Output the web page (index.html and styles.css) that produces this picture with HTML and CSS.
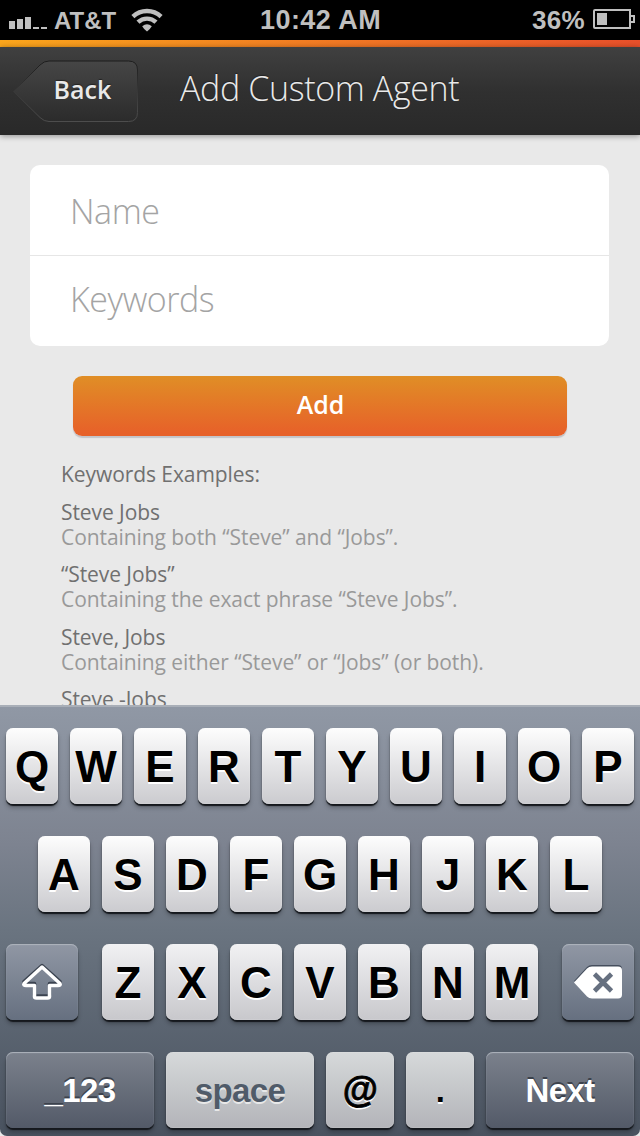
FILE: index.html
```
<!DOCTYPE html>
<html lang="en">
<head>
<meta charset="utf-8">
<title>Add Custom Agent</title>
<link rel="stylesheet" href="styles.css">
</head>
<body>
<div class="screen">
  <header class="status">
    <svg class="signal" width="38" height="14" viewBox="0 0 38 14" fill="#bfbfbf"><path d="M0 6h6v8H0zM8 4h6v10H8zM16 2h6v12h-6zM24 12h6v2h-6zM32 12h6v2h-6z"/></svg>
    <span class="carrier">AT&amp;T</span>
    <svg class="wifi" width="32" height="24" viewBox="0 0 32 24"><g fill="none" stroke="#bfbfbf" stroke-width="4.400"><path d="M1.900 8.600A20.500 20.500 0 0 1 30.100 8.600"/><path d="M7 14.200A13 13 0 0 1 25 14.200"/></g><path fill="#bfbfbf" d="M11.200 18.300Q16 14.300 20.800 18.300Q19 21.500 16 23.500Q13 21.500 11.200 18.300z"/></svg>
    <span class="time">10:42 AM</span>
    <span class="percent">36%</span>
    <svg class="battery" width="42" height="20" viewBox="0 0 42 20"><path fill="none" stroke="#bfbfbf" stroke-width="2" d="M2 1h35v18H2a1 1 0 0 1-1-1V2a1 1 0 0 1 1-1zM38 7h3v6h-3"/><path fill="#bfbfbf" d="M4 4h10v12H4z"/></svg>
  </header>
  <div class="accent"></div>
  <nav class="nav">
    <a class="back">
      <svg class="back-shape" width="128" height="64" viewBox="0 0 128 64">
        <defs>
          <linearGradient id="fill" x2="0" y2="1"><stop stop-color="#464646"/><stop offset="1" stop-color="#2b2b2b"/></linearGradient>
          <linearGradient id="edge" x2="0" y2="1"><stop stop-color="#1c1c1c"/><stop offset=".45" stop-color="#353535"/><stop offset="1" stop-color="#4d4d4d"/></linearGradient>
        </defs>
        <path fill="url(#fill)" stroke="url(#edge)" d="M1.500 31.500 28 5Q32 1 37 1H116.500Q125.500 1 125.500 10V52.500Q125.500 61.500 116.500 61.500H37Q32 61.500 28 57.500z"/>
      </svg>
      <span class="back-label">Back</span>
    </a>
    <h1 class="title">Add Custom Agent</h1>
  </nav>
  <main class="content">
    <div class="fields">
      <div class="field">Name</div>
      <div class="field">Keywords</div>
    </div>
    <button class="add">Add</button>
    <section class="examples">
      <p>Keywords Examples:</p>
      <p>Steve Jobs<br><span class="hint">Containing both “Steve” and “Jobs”.</span></p>
      <p>“Steve Jobs”<br><span class="hint">Containing the exact phrase “Steve Jobs”.</span></p>
      <p>Steve, Jobs<br><span class="hint">Containing either “Steve” or “Jobs” (or both).</span></p>
      <p>Steve -Jobs</p>
    </section>
  </main>
  <section class="keyboard">
    <div class="row"><b class="key">Q</b><b class="key">W</b><b class="key">E</b><b class="key">R</b><b class="key">T</b><b class="key">Y</b><b class="key">U</b><b class="key">I</b><b class="key">O</b><b class="key">P</b></div>
    <div class="row"><b class="key">A</b><b class="key">S</b><b class="key">D</b><b class="key">F</b><b class="key">G</b><b class="key">H</b><b class="key">J</b><b class="key">K</b><b class="key">L</b></div>
    <div class="row lower">
      <b class="key dark shift"><svg width="42" height="38" viewBox="0 0 42 38" fill="none" stroke-width="3.500" stroke-linejoin="round"><path stroke="#3b4350" d="M21 2.500 39 18.500Q40 20.500 37 20.500H28.500V31.500Q28.500 33 26.500 33H15.500Q13.500 33 13.500 31.500V20.500H5Q2 20.500 3 18.500z"/><path stroke="#fff" d="M21 4 39 20.500Q40 22.500 37 22.500H28.500V33.500Q28.500 35 26.500 35H15.500Q13.500 35 13.500 33.500V22.500H5Q2 22.500 3 20.500z"/></svg></b>
      <b class="key">Z</b><b class="key">X</b><b class="key">C</b><b class="key">V</b><b class="key">B</b><b class="key">N</b><b class="key">M</b>
      <b class="key dark delete"><svg width="48" height="34" viewBox="0 0 48 34"><path fill="#454e5d" d="M0 16 13 2Q15 0 18 0H44Q48 0 48 4V29H18z"/><path fill="#fff" d="M0 17.500 13 3.500Q15 1.500 18 1.500H44Q48 1.500 48 5.500V29.500Q48 33.500 44 33.500H18Q15 33.500 13 31.500z"/><path stroke="#667080" stroke-width="4.600" d="m20.500 9 17 17m0-17-17 17"/></svg></b>
    </div>
    <div class="row bottom">
      <b class="key dark wide">_123</b>
      <b class="key gray wide space">space</b>
      <b class="key gray at">@</b>
      <b class="key gray dot">.</b>
      <b class="key dark wide">Next</b>
    </div>
  </section>
</div>
</body>
</html>
```
FILE: styles.css
```
* { box-sizing: border-box; }
body { margin: 0; background: #000; }
.screen {
  width: 640px; height: 1136px; overflow: hidden;
  display: flex; flex-direction: column;
  background: #e9e9e9; font-family: "Open Sans", sans-serif;
}
.status {
  display: grid; flex: none; height: 40px; background: #000; color: #bfbfbf;
  grid-template-columns: 45px 77px 138px 272px 61px 47px;
  align-items: start;
  font: bold 24px/28px "Liberation Sans", sans-serif;
  white-space: nowrap;
}
.signal { margin: 15px 0 0 9px; }
.carrier { margin: 7px 0 0 9px; }
.wifi { margin: 8px 0 0 9px; }
.time { margin-top: 6px; font-size: 27px; letter-spacing: .45px; }
.percent { margin-top: 6px; font-size: 26px; letter-spacing: .3px; }
.battery { margin-top: 9px; }
.accent { flex: none; height: 7px; background: linear-gradient(90deg, #fba61c, #e8502b); }
.nav {
  flex: none; display: flex; height: 88px; padding: 13px 0 0 12px;
  background: linear-gradient(#404040, #303030 50%, #292929);
  box-shadow: 0 1px 6px rgba(0,0,0,.4); color: #e9e9e9; z-index: 1;
}
.back { display: grid; width: 128px; height: 64px; }
.back-shape, .back-label { grid-area: 1 / 1; }
.back-label { padding: 11px 0 0 41.500px; font-size: 25px; line-height: 36px; font-weight: 600; text-shadow: 0 -1px 1px #222; }
.title { margin: 4px 0 0 40px; font-size: 34px; line-height: 48px; font-weight: 300; letter-spacing: -.37px; white-space: nowrap; text-shadow: 0 -1px 1px #222; }
.content { flex: none; height: 570px; overflow: hidden; padding: 30px 30px 0; }
.fields { width: 579px; height: 181px; border-radius: 10px; background: #fff; }
.field { height: 90px; padding: 22px 40px 0; font-size: 34px; line-height: 48px; font-weight: 300; letter-spacing: -.45px; color: #a4a4a4; }
.field + .field { height: 91px; border-top: 1px solid #e6e6e6; padding-top: 19px; }
.add {
  display: block; width: 494px; height: 60px; margin: 30px 0 0 43px; padding: 0 0 5px 1px;
  border: 0; border-radius: 9px; background: linear-gradient(#e08e26, #e76129 95%);
  box-shadow: 0 2px 1px #c4c4c8; color: #fff; font: 600 25px/36px "Open Sans", sans-serif;
}
.examples { padding: 26px 0 0 31px; font-size: 21px; line-height: 25px; letter-spacing: -.07px; color: #707070; }
.examples p { margin: 0 0 12.500px; white-space: nowrap; }
.hint { color: #999; }
.keyboard {
  flex: none; display: flex; flex-direction: column; gap: 32px;
  height: 431px; padding: 21px 6px 0; border-top: 2px solid #a9afb8;
  border-radius: 0 0 7px 7px;
  background: linear-gradient(#9098a5, #7d8390 32%, #6a7480 52%, #49525f);
  font-family: "Liberation Sans", sans-serif;
}
.row { display: flex; justify-content: center; gap: 12px; height: 76px; }
.key {
  display: flex; align-items: center; justify-content: center;
  width: 52px; height: 76px; padding-top: 2px; border-radius: 7px;
  background: linear-gradient(#fdfdfd, #cbcbcf);
  box-shadow: 0 2px 1px #15181d, 0 4px 4px rgba(0,0,0,.25), inset 0 0 1px #fff;
  font-size: 44px; line-height: 50px; color: #000; text-shadow: 0 2px 0 #fff;
}
.lower .key { background: linear-gradient(#f1f1f3, #c8c8cc); }
.row .dark {
  background: linear-gradient(#9097a4, #667080); color: #fff;
  box-shadow: 0 2px 1px #15181d, 0 4px 4px rgba(0,0,0,.25), inset 0 1px 1px #aeb4bd;
  text-shadow: 0 -2px 0 #3c424c;
}
.lower .shift, .lower .delete { width: 72px; padding-top: 0; }
.shift { margin-right: 12px; }
.delete { margin-left: 12px; }
.bottom .key { font-size: 33px; letter-spacing: -.6px; }
.bottom .dark { background: linear-gradient(#7b818c, #535a68); }
.bottom .gray { background: linear-gradient(#d6d9da, #b3b4b9); }
.bottom .wide { width: 148px; }
.bottom .space { color: #505b69; text-shadow: 0 2px 0 #e8e8e8; }
.bottom .at, .bottom .dot { width: 68px; }
.bottom .at { font-size: 36px; padding-top: 0; -webkit-text-stroke: .8px #000; }
```
